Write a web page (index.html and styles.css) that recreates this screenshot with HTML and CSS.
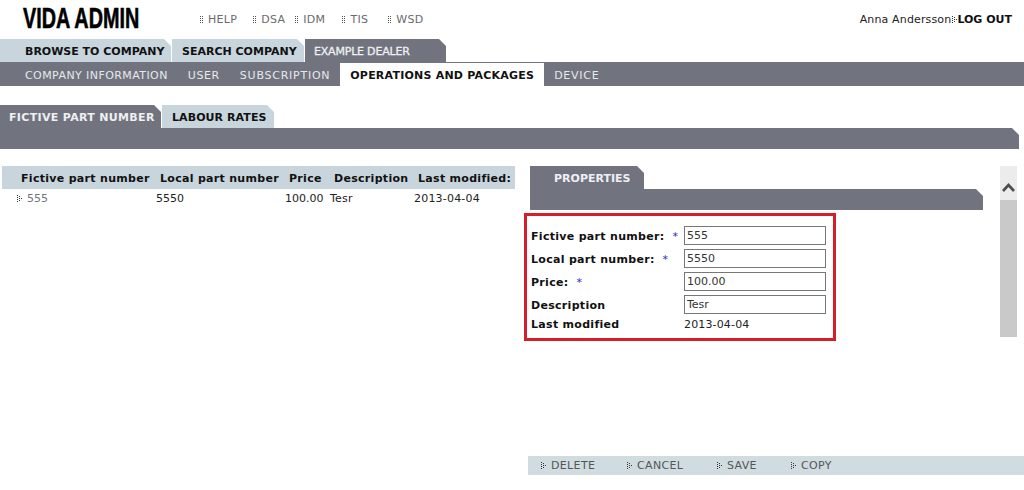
FILE: index.html
```html
<!DOCTYPE html>
<html lang="en">
<head>
<meta charset="utf-8">
<title>VIDA Admin</title>
<link rel="stylesheet" href="styles.css">
</head>
<body>
<svg class="defs" width="0" height="0" aria-hidden="true">
  <defs>
    <g id="grip" fill="#555"><rect x="0" y="0" width="1" height="1"/><rect x="2" y="0" width="1" height="1"/><rect x="0" y="2" width="1" height="1"/><rect x="2" y="2" width="1" height="1"/><rect x="0" y="4" width="1" height="1"/><rect x="2" y="4" width="1" height="1"/><rect x="0" y="6" width="1" height="1"/><rect x="2" y="6" width="1" height="1"/></g>
    <g id="dotarrow" fill="#333"><rect x="0" y="0" width="1" height="1"/><rect x="0" y="2" width="1" height="1"/><rect x="0" y="4" width="1" height="1"/><rect x="0" y="6" width="1" height="1"/><rect x="2" y="1" width="1" height="1"/><rect x="2" y="3" width="1" height="1"/><rect x="2" y="5" width="1" height="1"/><rect x="4" y="3" width="1" height="1"/></g>
  </defs>
</svg>
<header class="top">
  <div class="logo"><span class="logo-text">VIDA ADMIN</span></div>
  <nav class="links">
    <a class="link l-help"><svg class="grip" width="3" height="7"><use href="#grip"/></svg>HELP</a>
    <a class="link l-dsa"><svg class="grip" width="3" height="7"><use href="#grip"/></svg>DSA</a>
    <a class="link l-idm"><svg class="grip" width="3" height="7"><use href="#grip"/></svg>IDM</a>
    <a class="link l-tis"><svg class="grip" width="3" height="7"><use href="#grip"/></svg>TIS</a>
    <a class="link"><svg class="grip" width="3" height="7"><use href="#grip"/></svg>WSD</a>
  </nav>
  <div class="user"><span class="uname">Anna Andersson</span><svg class="ugrip" width="5" height="7"><use href="#dotarrow"/></svg><b>LOG OUT</b></div>
</header>

<div class="tabs main-tabs">
  <div class="tab light t-browse">BROWSE TO COMPANY</div>
  <div class="tab light t-search">SEARCH COMPANY</div>
  <div class="tab dark t-dealer">EXAMPLE DEALER</div>
</div>
<nav class="subnav">
  <a class="sub s-info">COMPANY INFORMATION</a>
  <a class="sub s-user">USER</a>
  <a class="sub s-wide">SUBSCRIPTION</a>
  <a class="sub active">OPERATIONS AND PACKAGES</a>
  <a class="sub s-wide">DEVICE</a>
</nav>

<div class="tabs sec-tabs">
  <div class="tab dark t-fictive">FICTIVE PART NUMBER</div>
  <div class="tab light t-labour">LABOUR RATES</div>
</div>
<div class="bar wide"></div>

<main class="content">
  <section class="list">
    <table class="grid">
      <thead>
        <tr>
          <th class="c1">Fictive part number</th>
          <th class="c2">Local part number</th>
          <th class="c3">Price</th>
          <th class="c4">Description</th>
          <th class="c5">Last modified:</th>
        </tr>
      </thead>
      <tbody>
        <tr>
          <td class="c1 first"><svg class="arrow" width="5" height="7"><use href="#dotarrow"/></svg><span class="muted">555</span></td>
          <td class="c2">5550</td>
          <td class="c3">100.00</td>
          <td class="c4">Tesr</td>
          <td class="c5">2013-04-04</td>
        </tr>
      </tbody>
    </table>
  </section>

  <section class="detail">
    <div class="detail-top">
      <div class="detail-main">
        <div class="tab dark t-props">PROPERTIES</div>
        <div class="bar short"></div>
        <form class="props">
          <div class="row"><label>Fictive part number:<i>*</i></label><input value="555"></div>
          <div class="row"><label>Local part number:<i>*</i></label><input value="5550"></div>
          <div class="row"><label>Price:<i>*</i></label><input value="100.00"></div>
          <div class="row"><label>Description</label><input value="Tesr"></div>
          <div class="row plain"><label>Last modified</label><span>2013-04-04</span></div>
        </form>
      </div>
      <div class="scroll">
        <div class="scroll-btn"><svg width="13" height="9" viewBox="0 0 13 9"><path d="M1 8 6.5 2 12 8" fill="none" stroke="#4a4d52" stroke-width="2.6"/></svg></div>
        <div class="scroll-track"></div>
      </div>
    </div>
    <div class="toolbar">
      <a class="act a-del"><svg class="arrow" width="5" height="7"><use href="#dotarrow"/></svg>DELETE</a>
      <a class="act a-can"><svg class="arrow" width="5" height="7"><use href="#dotarrow"/></svg>CANCEL</a>
      <a class="act a-sav"><svg class="arrow" width="5" height="7"><use href="#dotarrow"/></svg>SAVE</a>
      <a class="act"><svg class="arrow" width="5" height="7"><use href="#dotarrow"/></svg>COPY</a>
    </div>
  </section>
</main>
</body>
</html>
```
FILE: styles.css
```css
* { box-sizing: border-box; }
html, body { margin: 0; height: 490px; overflow: hidden; background: #fff; }
body { font-family: "DejaVu Sans", Verdana, sans-serif; font-size: 11px; color: #111; }
.defs { position: absolute; }

.top { display: flex; align-items: center; height: 39px; padding-left: 23px; }
.logo { width: 177px; height: 39px; font-family: "Liberation Sans", sans-serif; font-weight: 700; font-size: 30px; line-height: 35px; color: #000; white-space: nowrap; }
.logo-text { display: inline-block; transform: scaleX(0.66); transform-origin: left center; -webkit-text-stroke: 0.6px #000; }
.links { display: flex; color: #6b6b6b; letter-spacing: 0.3px; }
.link { display: flex; align-items: center; }
.l-help { margin-right: 16px; }
.l-dsa { margin-right: 10px; }
.l-idm { margin-right: 17px; }
.l-tis { margin-right: 20px; }
.grip { margin-right: 5px; }
.user { display: flex; align-items: center; margin-left: auto; padding-right: 12px; color: #222; }
.uname { letter-spacing: 0.15px; }
.user b { color: #111; }
.ugrip { margin: 0 0 0 1px; }

.tabs { display: flex; height: 23px; }
.tab { height: 23px; padding-top: 1px; line-height: 23px; font-weight: 700; white-space: nowrap; clip-path: polygon(0 0, calc(100% - 7px) 0, 100% 7px, 100% 100%, 0 100%); }
.light { background: #c8d5dc; color: #111; }
.dark { background: #71747f; color: #eef0f2; }
.t-browse { width: 171px; padding-left: 25px; margin-right: 1px; }
.t-search { width: 132px; padding-left: 10px; margin-right: 1px; }
.t-dealer { width: 141px; padding-left: 9px; font-weight: 400; letter-spacing: -0.2px; -webkit-text-stroke: 0.3px #eef0f2; }

.subnav { display: flex; height: 24px; background: #71747f; color: #e6e8ea; padding: 1px 0 0 15px; }
.sub { height: 23px; padding: 1px 10px 0; line-height: 23px; white-space: nowrap; }
.s-info { letter-spacing: 0.42px; }
.s-user { letter-spacing: 0.6px; }
.s-wide { letter-spacing: 0.75px; }
.sub.active { background: #fff; color: #111; font-weight: 700; letter-spacing: 0.22px; }

.sec-tabs { margin-top: 19px; }
.t-fictive { width: 161px; padding-left: 9px; margin-right: 1px; letter-spacing: 0.33px; }
.t-labour { width: 112px; padding-left: 10px; letter-spacing: 0.08px; }
.bar { height: 21px; background: #71747f; clip-path: polygon(0 0, calc(100% - 7px) 0, 100% 7px, 100% 100%, 0 100%); }
.wide { width: 1019px; }

.content { display: flex; margin-top: 17px; height: 309px; }
.list { width: 525px; padding-left: 2px; }
.grid { width: 513px; border-collapse: collapse; table-layout: fixed; }
.grid th { height: 23px; padding: 1px 0 0; background: #c8d5dc; text-align: left; font-weight: 700; letter-spacing: 0.3px; white-space: nowrap; }
.grid td { height: 18px; padding: 0; white-space: nowrap; color: #222; }
.c1 { width: 154px; }
.c2 { width: 129px; }
.c3 { width: 45px; }
.c4 { width: 84px; }
.c5 { width: 101px; }
.grid th.c1 { padding-left: 19px; }
.grid th.c2 { padding-left: 4px; }
.grid th.c3 { padding-left: 4px; }
.grid th.c4 { padding-left: 4px; }
.grid th.c5 { padding-left: 4px; }
.grid td.c4, .grid td.c5 { letter-spacing: 0.2px; }
.grid td.first { padding-left: 15px; }
.grid .arrow { margin-right: 5px; }
.muted { color: #71747f; }

.detail { display: flex; flex-direction: column; flex: 1; }
.detail-top { display: flex; flex: 1; }
.detail-main { width: 475px; display: flex; flex-direction: column; align-items: flex-start; }
.t-props { width: 114px; margin-left: 5px; padding-left: 24px; }
.short { width: 453px; margin-left: 5px; }
.props { width: 312px; height: 128px; margin: 3px 0 0 -1px; border: 3px solid #d5202c; padding: 10px 0 0 4px; }
.row { display: flex; align-items: center; height: 19px; margin-bottom: 4px; }
.row label { width: 153px; padding-top: 1px; font-weight: 700; color: #111; letter-spacing: 0.3px; white-space: nowrap; }
.row i { margin-left: 8px; font-style: normal; font-weight: 400; color: #2a2acc; }
.row input { width: 142px; height: 19px; padding: 0 2px; border: 1px solid #777; font: inherit; color: #333; background: #fff; border-radius: 0; outline: none; }
.row.plain { height: 15px; margin-top: -2px; margin-bottom: 0; }
.row.plain span { padding-top: 1px; color: #222; letter-spacing: 0.15px; }

.scroll { width: 17px; height: 171px; }
.scroll-btn { height: 34px; background: #ececec; display: flex; align-items: center; justify-content: center; padding-top: 8px; }
.scroll-track { height: 137px; background: #c9c9c9; }

.toolbar { display: flex; align-items: center; height: 19px; margin-left: 3px; background: #d0dce0; color: #555; letter-spacing: 0.35px; padding-left: 13px; }
.act { display: flex; align-items: center; white-space: nowrap; }
.act .arrow { margin-right: 5px; }
.a-del { width: 86px; }
.a-can { width: 90px; }
.a-sav { width: 74px; }
```
